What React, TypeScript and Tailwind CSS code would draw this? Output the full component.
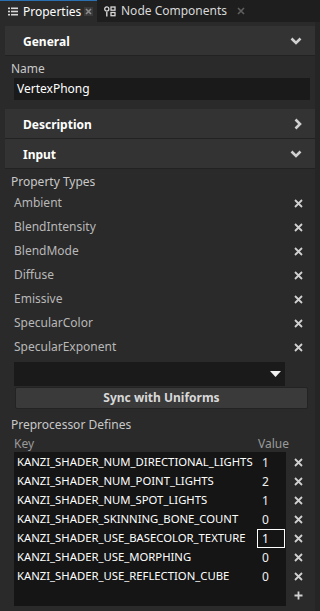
import React from "react";

const font = { fontFamily: '"Noto Sans", "Open Sans", sans-serif' };

function ChevronDown() {
  return (
    <svg width="12" height="8" viewBox="0 0 12 8">
      <polyline points="1.5,1.5 6,6 10.5,1.5" fill="none" stroke="#d0d0d0" strokeWidth="2.6" />
    </svg>
  );
}
function ChevronRight() {
  return (
    <svg width="8" height="12" viewBox="0 0 8 12">
      <polyline points="1.5,1.5 6,6 1.5,10.5" fill="none" stroke="#d0d0d0" strokeWidth="2.6" />
    </svg>
  );
}
function XIcon({ color = "#d0d0d0" }: { color?: string }) {
  return (
    <svg width="9" height="9" viewBox="0 0 9 9">
      <path d="M1 1 L8 8 M8 1 L1 8" stroke={color} strokeWidth="1.8" />
    </svg>
  );
}
function PlusIcon() {
  return (
    <svg width="9" height="9" viewBox="0 0 9 9">
      <path d="M4.5 0.5 V8.5 M0.5 4.5 H8.5" stroke="#d0d0d0" strokeWidth="1.8" />
    </svg>
  );
}

function Header({ title, open }: { title: string; open: boolean }) {
  return (
    <div className="h-[30px] bg-[#333333] border-b border-[#222222] flex items-center justify-between pl-[18px] pr-[13px] shrink-0">
      <span className="text-white font-bold text-[12px] pt-[2px]">{title}</span>
      {open ? <ChevronDown /> : <ChevronRight />}
    </div>
  );
}

const props = ["Ambient", "BlendIntensity", "BlendMode", "Diffuse", "Emissive", "SpecularColor", "SpecularExponent"];
const defines: [string, string][] = [
  ["KANZI_SHADER_NUM_DIRECTIONAL_LIGHTS", "1"],
  ["KANZI_SHADER_NUM_POINT_LIGHTS", "2"],
  ["KANZI_SHADER_NUM_SPOT_LIGHTS", "1"],
  ["KANZI_SHADER_SKINNING_BONE_COUNT", "0"],
  ["KANZI_SHADER_USE_BASECOLOR_TEXTURE", "1"],
  ["KANZI_SHADER_USE_MORPHING", "0"],
  ["KANZI_SHADER_USE_REFLECTION_CUBE", "0"],
];

export default function App() {
  return (
    <div className="w-[320px] h-[611px] bg-[#2a2a2a] overflow-hidden flex flex-col" style={font}>
      {/* tabs */}
      <div className="h-[22px] bg-[#1e1e1e] flex items-stretch shrink-0">
        <div className="w-[97px] shrink-0 bg-[#2a2a2a] border-t border-[#2a6fb0] flex items-center pl-[8px]">
          <svg width="10" height="9" viewBox="0 0 10 9" className="shrink-0">
            <rect x="0" y="0.5" width="2" height="1.6" fill="#d8d8d8" />
            <rect x="3" y="0.5" width="7" height="1.6" fill="#d8d8d8" />
            <rect x="0" y="3.7" width="2" height="1.6" fill="#d8d8d8" />
            <rect x="3" y="3.7" width="7" height="1.6" fill="#d8d8d8" />
            <rect x="0" y="6.9" width="2" height="1.6" fill="#d8d8d8" />
            <rect x="3" y="6.9" width="7" height="1.6" fill="#d8d8d8" />
          </svg>
          <span className="ml-[5px] text-white text-[12px] leading-none whitespace-nowrap">Properties</span>
          <span className="ml-auto mr-[4px] w-[9px] h-[9px] bg-[#3a3a3a] flex items-center justify-center shrink-0">
            <svg width="7" height="7" viewBox="0 0 7 7">
              <path d="M1 1 L6 6 M6 1 L1 6" stroke="#8a8a8a" strokeWidth="1.6" />
            </svg>
          </span>
        </div>
        <div className="flex items-center pl-[7px]">
          <svg width="12" height="11" viewBox="0 0 12 11">
            <circle cx="2.8" cy="3" r="2.1" fill="none" stroke="#d8d8d8" strokeWidth="1.3" />
            <rect x="2.1" y="6" width="1.4" height="4.5" fill="#d8d8d8" />
            <rect x="7" y="1" width="4" height="3.2" fill="none" stroke="#d8d8d8" strokeWidth="1.3" />
            <rect x="7" y="6.5" width="4" height="3.2" fill="none" stroke="#d8d8d8" strokeWidth="1.3" />
          </svg>
          <span className="ml-[5px] text-[#d8d8d8] text-[12px] leading-none whitespace-nowrap">Node Components</span>
          <span className="ml-[10px] flex items-center">
            <svg width="8" height="8" viewBox="0 0 8 8">
              <path d="M1 1 L7 7 M7 1 L1 7" stroke="#5e5e5e" strokeWidth="1.7" />
            </svg>
          </span>
        </div>
      </div>

      <div className="flex-1 flex">
        <div className="w-[315px] pl-[5px] pt-[4px] flex flex-col">
          <Header title="General" open />
          <div className="pl-[6px] pr-[5px] pt-[3px] pb-[9px]">
            <div className="text-[#c8c8c8] text-[12px] h-[19px] leading-[19px]">Name</div>
            <div className="ml-[3px] h-[22px] bg-[#1a1a1a] flex items-center pl-[3px] text-white text-[12px]">VertexPhong</div>
          </div>
          <Header title="Description" open={false} />
          <Header title="Input" open />
          <div className="pl-[6px] pt-[4px]">
            <div className="text-[#c8c8c8] text-[12px] h-[18px] leading-[18px]">Property Types</div>
            <div className="flex flex-col">
              {props.map((p) => (
                <div key={p} className="h-[24px] flex items-center justify-between pl-[3px] pr-[12px]">
                  <span className="text-[#b8b8b8] text-[12px]">{p}</span>
                  <XIcon />
                </div>
              ))}
            </div>
            <div className="ml-[3px] mt-[3px] w-[271px] h-[24px] bg-[#1a1a1a] flex items-center justify-end pr-[4px]">
              <svg width="11" height="6" viewBox="0 0 11 6">
                <polygon points="0,0 11,0 5.5,6" fill="#f0f0f0" />
              </svg>
            </div>
            <div className="ml-[4px] mt-[1px] w-[293px] h-[22px] bg-[#3a3a3a] border border-[#232323] rounded-[2px] flex items-center justify-center text-[#d8d8d8] text-[12px] font-bold">
              Sync with Uniforms
            </div>
            <div className="text-[#c8c8c8] text-[12px] h-[18px] leading-[18px] mt-[7px]">Preprocessor Defines</div>
            <div className="flex text-[#9a9a9a] text-[12px] h-[16px] leading-[16px] mt-[2px]">
              <span className="w-[247px] pl-[3px]">Key</span>
              <span>Value</span>
            </div>
            <div className="flex">
              <div className="ml-[3px] w-[272px] h-[154px] bg-[#151515] pt-[1px]">
                {defines.map(([k, v], i) => (
                  <div key={k} className="h-[19px] flex items-center">
                    <span className="w-[243px] pl-[3px] text-white text-[11.3px] whitespace-nowrap overflow-hidden">{k}</span>
                    {i === 4 ? (
                      <span className="w-[28px] h-[19px] border border-white flex items-center pl-[4px] text-white text-[12px]">{v}</span>
                    ) : (
                      <span className="pl-[5px] text-[#f0f0f0] text-[12px]">{v}</span>
                    )}
                  </div>
                ))}
              </div>
              <div className="flex flex-col pl-[8px] pt-[1px]">
                {defines.map(([k]) => (
                  <div key={k} className="h-[19px] flex items-center">
                    <XIcon />
                  </div>
                ))}
                <div className="h-[19px] flex items-center">
                  <PlusIcon />
                </div>
              </div>
            </div>
          </div>
        </div>
        <div className="flex-1 bg-[#252525]" />
      </div>
    </div>
  );
}
